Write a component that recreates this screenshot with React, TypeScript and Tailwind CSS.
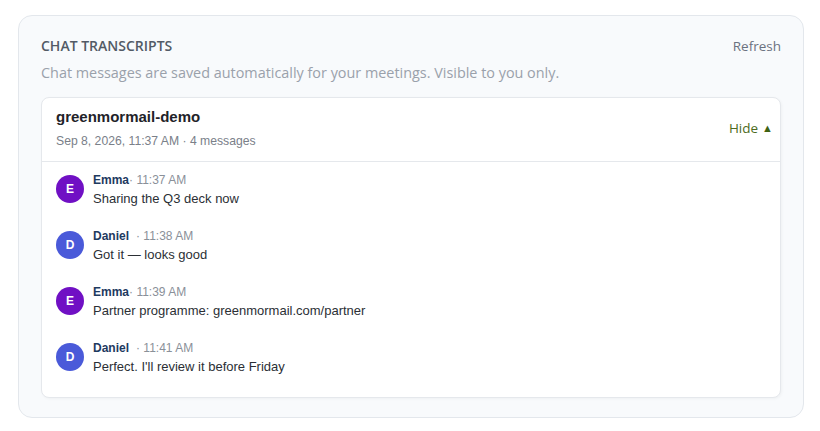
const messages = [
  { name: "Emma", initial: "E", time: "11:37 AM", text: "Sharing the Q3 deck now", avatar: "bg-[#7010c4]", gap: "ml-0" },
  { name: "Daniel", initial: "D", time: "11:38 AM", text: "Got it — looks good", avatar: "bg-[#4a5ad9]", gap: "ml-[7px]" },
  { name: "Emma", initial: "E", time: "11:39 AM", text: "Partner programme: greenmormail.com/partner", avatar: "bg-[#7010c4]", gap: "ml-0" },
  { name: "Daniel", initial: "D", time: "11:41 AM", text: "Perfect. I'll review it before Friday", avatar: "bg-[#4a5ad9]", gap: "ml-[7px]" },
];

export default function App() {
  return (
    <div className="min-h-[431px] w-full bg-white pl-[18px] pr-[16px] pt-[15px] pb-[14px]">
      <section className="rounded-[14px] border border-[#e3e7ec] bg-[#f8fafc] px-[22px] pt-[21px] pb-[19px] font-['Open_Sans',sans-serif]">
        <div className="flex items-center justify-between">
          <h2 className="text-[14px] font-semibold leading-[18px] text-[#525a66]">CHAT TRANSCRIPTS</h2>
          <button type="button" className="text-[13.5px] leading-[18px] text-[#6b7280]">
            Refresh
          </button>
        </div>
        <p className="mt-[9px] text-[14.4px] leading-[18px] text-[#9aa1ab]">
          Chat messages are saved automatically for your meetings. Visible to you only.
        </p>

        <div className="mt-[15px] overflow-hidden rounded-[8px] border border-[#e5e8ec] bg-white font-['Liberation_Sans',Arial,sans-serif] shadow-[1px_1px_3px_rgba(0,0,0,0.04)]">
          <div className="flex items-center justify-between border-b border-[#e5e8ec] pr-[7px] pl-[14px] pt-[10px] pb-[12px]">
            <div>
              <div className="text-[15px] font-bold leading-[18px] text-[#1f2329]">greenmormail-demo</div>
              <div className="mt-[7px] text-[12.2px] leading-[16px] text-[#7a8089]">Sep 8, 2026, 11:37 AM · 4 messages</div>
            </div>
            <button type="button" className="flex items-center gap-[4px] font-['Open_Sans',sans-serif] text-[13.5px] text-[#4d6b22]">
              Hide <span className="text-[11px] text-[#3f6212]">▲</span>
            </button>
          </div>

          <ul className="flex flex-col gap-[21px] pl-[14px] pr-[15px] pt-[10px] pb-[22px]">
            {messages.map((m, i) => (
              <li key={i} className="flex items-start gap-[9px]">
                <div className={`mt-[3px] flex h-[28px] w-[28px] shrink-0 items-center justify-center rounded-full ${m.avatar} text-[12px] font-bold text-white`}>
                  {m.initial}
                </div>
                <div>
                  <div className="text-[12px] leading-[16px]">
                    <span className="font-bold text-[#1e3a5f]">{m.name}</span>
                    <span className={`${m.gap} text-[#8a9099]`}>· {m.time}</span>
                  </div>
                  <div className="mt-[2px] text-[13px] leading-[17px] text-[#2b2f35]">{m.text}</div>
                </div>
              </li>
            ))}
          </ul>
        </div>
      </section>
    </div>
  );
}
